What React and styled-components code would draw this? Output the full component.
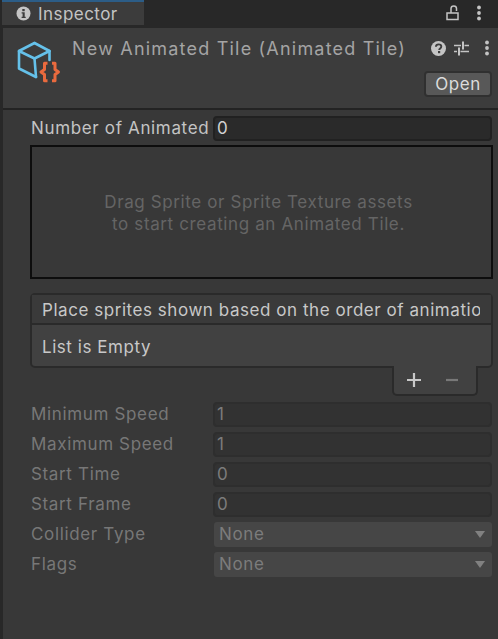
import React from 'react';
import styled, { createGlobalStyle } from 'styled-components';

const GlobalStyle = createGlobalStyle`
  html, body { margin: 0; padding: 0; background: #282828; }
  body { font-family: Inter, "Noto Sans", sans-serif; }
`;

const Window = styled.div`
  width: 498px;
  height: 639px;
  overflow: hidden;
  display: flex;
  flex-direction: column;
  background: #282828;
`;

const TabBar = styled.div`
  height: 28px;
  flex: none;
  display: flex;
  align-items: flex-start;
  justify-content: space-between;
  background: #282828;
`;

const Tab = styled.div`
  width: 142px;
  height: 25px;
  margin-left: 2px;
  border-top: 2px solid #2c5d87;
  display: flex;
  align-items: center;
  gap: 7px;
  padding-left: 14px;
  box-sizing: border-box;
  background: #3c3c3c;
  color: #c4c4c4;
  font-size: 17px;
  letter-spacing: 0.45px;
`;

const TabActions = styled.div`
  display: flex;
  align-items: center;
  gap: 16px;
  padding: 5px 16px 0 0;
`;

const Panel = styled.div`
  flex: 1;
  margin-left: 3px;
  display: flex;
  flex-direction: column;
  background: #383838;
`;

const Header = styled.div`
  height: 82px;
  flex: none;
  box-sizing: border-box;
  display: flex;
  background: #3c3c3c;
  border-bottom: 2px solid #232323;
  padding: 8px 6px 0 13px;
`;

const AssetIcon = styled.svg`
  width: 48px;
  height: 48px;
  flex: none;
  margin-top: 4px;
`;

const HeaderMain = styled.div`
  flex: 1;
  min-width: 0;
  padding-left: 8px;
  display: flex;
  flex-direction: column;
`;

const TitleRow = styled.div`
  display: flex;
  align-items: center;
  justify-content: space-between;
  height: 24px;
  padding-right: 2px;
`;

const Title = styled.div`
  color: #a4a4a4;
  font-size: 18px;
  letter-spacing: 1.2px;
  white-space: nowrap;
`;

const HeaderActions = styled.div`
  display: flex;
  align-items: center;
  gap: 8px;
`;

const HeaderDots = styled.span`
  display: flex;
  margin-left: 7px;
`;

const OpenButton = styled.button`
  align-self: flex-end;
  width: 68px;
  height: 26px;
  margin-top: 11px;
  padding: 0;
  border: 2px solid #303030;
  border-radius: 4px;
  background: #585858;
  color: #dcdcdc;
  font: 400 17px Inter, sans-serif;
  letter-spacing: 0.5px;
`;

const Content = styled.div`
  display: flex;
  flex-direction: column;
  padding: 3px 5px 0 27px;
`;

const Row = styled.div`
  display: grid;
  grid-template-columns: 182px 1fr;
  align-items: center;
  height: 30px;
  padding: 0 1px;
  color: ${p => (p.$dim ? '#777' : '#c4c4c4')};
  font-size: 17px;
  letter-spacing: 0.65px;
  white-space: nowrap;
`;

const Field = styled.div`
  height: 25px;
  box-sizing: border-box;
  display: flex;
  align-items: center;
  padding-left: 2px;
  border: 2px solid ${p => (p.$dim ? '#2e2e2e' : '#212121')};
  border-radius: 4px;
  background: ${p => (p.$dim ? '#323232' : '#2a2a2a')};
  color: ${p => (p.$dim ? '#7c7c7c' : '#d2d2d2')};
`;

const Select = styled.div`
  height: 25px;
  box-sizing: border-box;
  display: flex;
  align-items: center;
  justify-content: space-between;
  padding: 0 7px 0 5px;
  margin-left: 1px;
  border-radius: 3px;
  background: #464646;
  color: #7c7c7c;
`;

const Caret = styled.span`
  width: 0;
  height: 0;
  border-left: 5px solid transparent;
  border-right: 5px solid transparent;
  border-top: 7px solid #818181;
`;

const DropZone = styled.div`
  height: 134px;
  margin: 2px 0 14px;
  box-sizing: border-box;
  display: flex;
  flex-direction: column;
  align-items: center;
  justify-content: center;
  border: 2px solid #0d0d0d;
  color: #656565;
  font-size: 17px;
  line-height: 22px;
  letter-spacing: 0.62px;
  text-align: center;
  background: #383838;
  padding: 2px 6px 0 0;
`;

const ListBox = styled.div`
  height: 75px;
  box-sizing: border-box;
  border: 2px solid #2a2a2a;
  border-radius: 5px;
  background: #414141;
  display: flex;
  flex-direction: column;
  color: #c8c8c8;
  font-size: 17px;
  letter-spacing: 0.55px;
`;

const ListHeader = styled.div`
  height: 30px;
  flex: none;
  box-sizing: border-box;
  padding: 1px 11px 0 10px;
  display: flex;
  align-items: center;
  background: #3a3a3a;
  border-bottom: 2px solid #2a2a2a;
  white-space: nowrap;
`;

const ListHeaderText = styled.div`
  overflow: hidden;
  flex: 1;
`;

const ListEmpty = styled.div`
  padding: 12px 10px 0;
`;

const ListFooter = styled.div`
  align-self: flex-end;
  width: 86px;
  height: 30px;
  margin: -2px 15px 3px 0;
  box-sizing: border-box;
  border: 2px solid #2a2a2a;
  border-top: none;
  border-radius: 0 0 5px 5px;
  background: #414141;
  display: flex;
  align-items: center;
  justify-content: center;
  gap: 22px;
  padding-right: 4px;
`;

const FooterIcon = styled.svg`
  width: 16px;
  height: 16px;
`;

function InfoIcon() {
  return (
    <svg width="15" height="15" viewBox="0 0 15 15">
      <circle cx="7.5" cy="7.5" r="7" fill="#c4c4c4" />
      <rect x="6.3" y="3" width="2.4" height="2.2" fill="#3c3c3c" />
      <path d="M5.6 6.3h3.1v4.4h1v1.2H5.6v-1.2h1V7.5h-1z" fill="#3c3c3c" />
    </svg>
  );
}

function LockIcon() {
  return (
    <svg width="14" height="16" viewBox="0 0 14 16" fill="none" stroke="#c4c4c4" strokeWidth="1.5">
      <rect x="1" y="8" width="11" height="6.5" />
      <path d="M5 8V3.6C5 2 6.2 1 7.8 1s2.7 1 2.7 2.6V6" />
    </svg>
  );
}

function DotsIcon({ color }) {
  return (
    <svg width="6" height="16" viewBox="0 0 6 16" fill={color}>
      <circle cx="3" cy="2.5" r="1.9" />
      <circle cx="3" cy="8" r="1.9" />
      <circle cx="3" cy="13.5" r="1.9" />
    </svg>
  );
}

function HelpIcon() {
  return (
    <svg width="15" height="15" viewBox="0 0 15 15">
      <circle cx="7.5" cy="7.5" r="7.5" fill="#c4c4c4" />
      <path d="M4.9 5.8C5 4.2 6.1 3.4 7.6 3.4c1.6 0 2.7.9 2.7 2.2 0 1.9-2.1 1.8-2.1 3.3" fill="none" stroke="#3c3c3c" strokeWidth="1.9" />
      <rect x="7" y="10" width="2.2" height="2.2" fill="#3c3c3c" />
    </svg>
  );
}

function PresetIcon() {
  return (
    <svg width="15" height="15" viewBox="0 0 15 15" fill="none" stroke="#c4c4c4" strokeWidth="1.5">
      <path d="M0 4.5h7M10.5 4.5H15M0 10.5h3M6.5 10.5H15" />
      <path d="M9 0.5v8M5 6.5v8" strokeWidth="2" />
    </svg>
  );
}

function TileAssetIcon() {
  return (
    <AssetIcon viewBox="0 0 48 48" fill="none">
      <g stroke="#65c1ea" strokeWidth="2.6" strokeLinejoin="round" strokeLinecap="round">
        <path d="M18.5 3 33.5 11v9" />
        <path d="M18.5 3 3 11v17.5L20 37" />
        <path d="M3 11 18.5 18.5 33.5 11" />
        <path d="M18.5 18.5 20 37" />
      </g>
      <g stroke="#ea6a3e" strokeWidth="3" strokeLinejoin="round">
        <path d="M31.5 23.2h-3v6.3l-3.5 2.5 3.5 2.5v6.3h3" />
        <path d="M36 23.2h3v6.3l3.5 2.5-3.5 2.5v6.3h-3" />
      </g>
    </AssetIcon>
  );
}

const speedRows = [
  ['Minimum Speed', '1'],
  ['Maximum Speed', '1'],
  ['Start Time', '0'],
  ['Start Frame', '0'],
];

const selectRows = [
  ['Collider Type', 'None'],
  ['Flags', 'None'],
];

export default function App() {
  return (
    <Window>
      <GlobalStyle />
      <TabBar>
        <Tab>
          <InfoIcon />
          Inspector
        </Tab>
        <TabActions>
          <LockIcon />
          <DotsIcon color="#c4c4c4" />
        </TabActions>
      </TabBar>
      <Panel>
        <Header>
          <TileAssetIcon />
          <HeaderMain>
            <TitleRow>
              <Title>New Animated Tile (Animated Tile)</Title>
              <HeaderActions>
                <HelpIcon />
                <PresetIcon />
                <HeaderDots>
                  <DotsIcon color="#c4c4c4" />
                </HeaderDots>
              </HeaderActions>
            </TitleRow>
            <OpenButton>Open</OpenButton>
          </HeaderMain>
        </Header>
        <Content>
          <Row>
            Number of Animated
            <Field>0</Field>
          </Row>
          <DropZone>
            <div>Drag Sprite or Sprite Texture assets</div>
            <div>to start creating an Animated Tile.</div>
          </DropZone>
          <ListBox>
            <ListHeader>
              <ListHeaderText>Place sprites shown based on the order of animation.</ListHeaderText>
            </ListHeader>
            <ListEmpty>List is Empty</ListEmpty>
          </ListBox>
          <ListFooter>
            <FooterIcon viewBox="0 0 16 16" stroke="#c8c8c8" strokeWidth="2.2">
              <path d="M8 1v14M1 8h14" />
            </FooterIcon>
            <FooterIcon viewBox="0 0 16 16" stroke="#787878" strokeWidth="2.2">
              <path d="M2 8h12" />
            </FooterIcon>
          </ListFooter>
          {speedRows.map(([label, value]) => (
            <Row key={label} $dim>
              {label}
              <Field $dim>{value}</Field>
            </Row>
          ))}
          {selectRows.map(([label, value]) => (
            <Row key={label} $dim>
              {label}
              <Select>
                {value}
                <Caret />
              </Select>
            </Row>
          ))}
        </Content>
      </Panel>
    </Window>
  );
}
